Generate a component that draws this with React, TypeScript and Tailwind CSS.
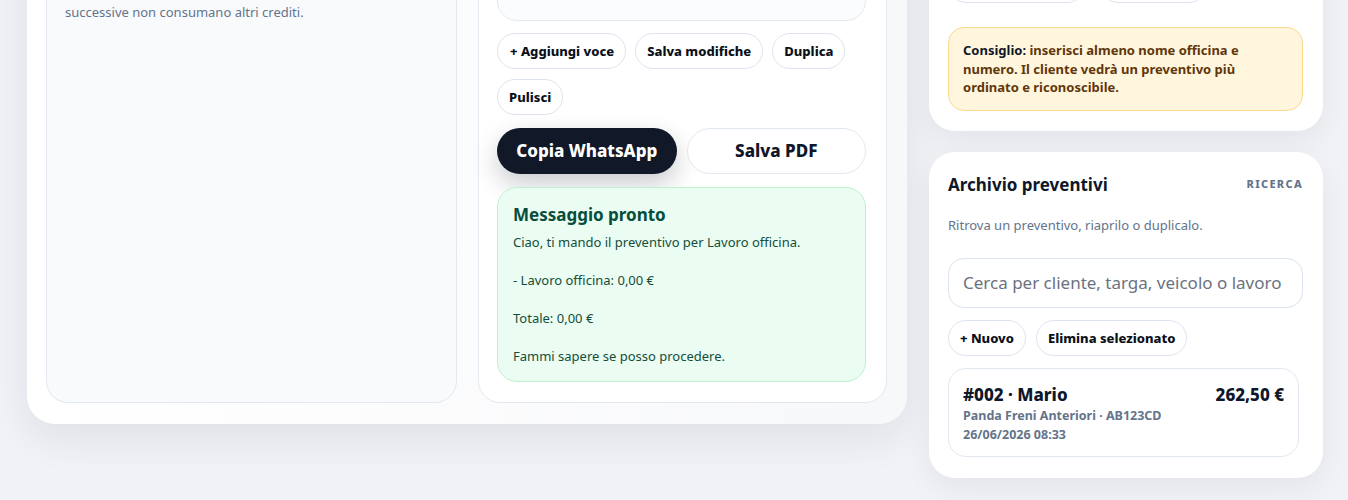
import React from "react";

const pill =
  "h-9 rounded-full border border-[#dde4ef] bg-white px-[11px] text-[13px] leading-[18px] font-extrabold text-[#0b0f19] whitespace-nowrap";

export default function App() {
  return (
    <div
      className="min-h-screen bg-[#f1f2f6] overflow-hidden"
      style={{ fontFamily: '"Noto Sans", "Open Sans", sans-serif' }}
    >
      <div className="flex items-start gap-[22px] pl-[27px] pr-[25px]">
        {/* main card */}
        <div className="-mt-[100px] w-[880px] shrink-0 rounded-[28px] bg-linear-to-r from-white to-[#f7f8fa] px-[19px] pt-[19px] pb-[21px] shadow-[0_14px_40px_rgba(15,23,42,0.08)]">
          <div className="grid grid-cols-[411px_409px] gap-[21px]">
            {/* left panel */}
            <div className="rounded-[22px] border border-[#e3e8f0] bg-[#f8fafc] px-[18px] pt-[18px]">
              <div className="h-[24px] text-[15px] font-bold text-[#0f172a]">Crediti</div>
              <p className="mt-[20px] text-[13px] leading-[20px] text-[#64748b]">
                Ogni preventivo esportato consuma un credito, le copie
                <br />
                successive non consumano altri crediti.
              </p>
            </div>

            {/* middle panel */}
            <div className="flex flex-col rounded-[22px] border border-[#e5e8ee] bg-white pl-[18px] pr-[20px] pt-[18px] pb-[20px]">
              <div className="flex h-[83px] items-end justify-between rounded-[20px] border border-[#e2e8f0] bg-[#fbfcfe] px-4 pb-[20px]">
                <span className="text-[14px] font-bold text-[#0f172a]">Totale</span>
                <span className="text-[16px] font-extrabold text-[#0f172a]">Riepilogo</span>
              </div>

              <div className="mt-[12px] flex flex-wrap gap-x-[9px] gap-y-[10px]">
                <button className={pill + " pl-[12px]"}>+ Aggiungi voce</button>
                <button className={pill}>Salva modifiche</button>
                <button className={pill}>Duplica</button>
                <button className={pill}>Pulisci</button>
              </div>

              <div className="mt-[13px] grid grid-cols-2 gap-[10px]">
                <button className="h-[46px] rounded-full bg-[#111827] text-[17px] font-extrabold text-white shadow-[0_10px_24px_rgba(17,24,39,0.22)]">
                  Copia WhatsApp
                </button>
                <button className="h-[46px] rounded-full border border-[#e2e8f0] bg-white text-[17px] font-extrabold text-[#0f172a]">
                  Salva PDF
                </button>
              </div>

              <div className="mt-[13px] rounded-[20px] border border-[#bdf2cf] bg-[#ebfcf2] px-[15px] pt-[15px] pb-[15px]">
                <div className="text-[17px] leading-[24px] font-bold text-[#064e3b]">
                  Messaggio pronto
                </div>
                <div className="mt-[6px] whitespace-pre-line text-[13px] leading-[19px] text-[#134e3a]">
                  {"Ciao, ti mando il preventivo per Lavoro officina.\n\n- Lavoro officina: 0,00 €\n\nTotale: 0,00 €\n\nFammi sapere se posso procedere."}
                </div>
              </div>
            </div>
          </div>
        </div>

        {/* right column */}
        <div className="-mt-[53px] flex w-[394px] shrink-0 flex-col gap-[21px]">
          <div className="rounded-[26px] bg-white pl-[19px] pr-[20px] pt-[20px] pb-[20px] shadow-[0_10px_30px_rgba(15,23,42,0.06)]">
            <div className="flex gap-[15px]">
              <button className={pill + " w-[137px]"}>Carica logo</button>
              <button className={pill + " w-[107px]"}>Rimuovi</button>
            </div>
            <div className="mt-[24px] rounded-[16px] border border-[#fcd98c] bg-[#fff6dd] px-[14px] py-[13px] text-[13px] leading-[18.5px] font-bold text-[#5f370b]">
              <span className="text-[#0f172a]">Consiglio:</span> inserisci almeno nome officina e
              numero. Il cliente vedrà un preventivo più ordinato e riconoscibile.
            </div>
          </div>

          <div className="rounded-[26px] bg-white pl-[19px] pr-[20px] pt-[21px] pb-[21px] shadow-[0_10px_30px_rgba(15,23,42,0.06)]">
            <div className="flex items-center justify-between">
              <div className="text-[17px] leading-[24px] font-bold text-[#0f172a]">
                Archivio preventivi
              </div>
              <div className="text-[11px] font-extrabold tracking-[0.12em] text-[#64748b]">
                RICERCA
              </div>
            </div>
            <p className="mt-[19px] text-[13px] leading-[18px] text-[#64748b]">
              Ritrova un preventivo, riaprilo o duplicalo.
            </p>
            <input
              className="mt-[24px] h-[50px] w-full rounded-[16px] border border-[#dbe3ee] bg-white px-[14px] text-[17px] text-[#0f172a] outline-none placeholder:text-[#6b7280]"
              placeholder="Cerca per cliente, targa, veicolo o lavoro"
            />
            <div className="mt-[12px] flex gap-[10px]">
              <button className={pill}>+ Nuovo</button>
              <button className={pill}>Elimina selezionato</button>
            </div>
            <div className="mt-[12px] mr-[4px] rounded-[18px] border border-[#e2e8f0] bg-white px-[14px] pt-[15px] pb-[12px]">
              <div className="flex items-start justify-between">
                <div className="text-[17px] leading-[22px] font-extrabold text-[#0f172a]">
                  #002 · Mario
                </div>
                <div className="text-[17px] leading-[22px] font-extrabold text-[#0f172a]">
                  262,50 €
                </div>
              </div>
              <div className="text-[12.5px] leading-[19px] font-bold text-[#64748b]">
                Panda Freni Anteriori · AB123CD
              </div>
              <div className="text-[12.5px] leading-[19px] font-bold text-[#64748b]">
                26/06/2026 08:33
              </div>
            </div>
          </div>
        </div>
      </div>
    </div>
  );
}
